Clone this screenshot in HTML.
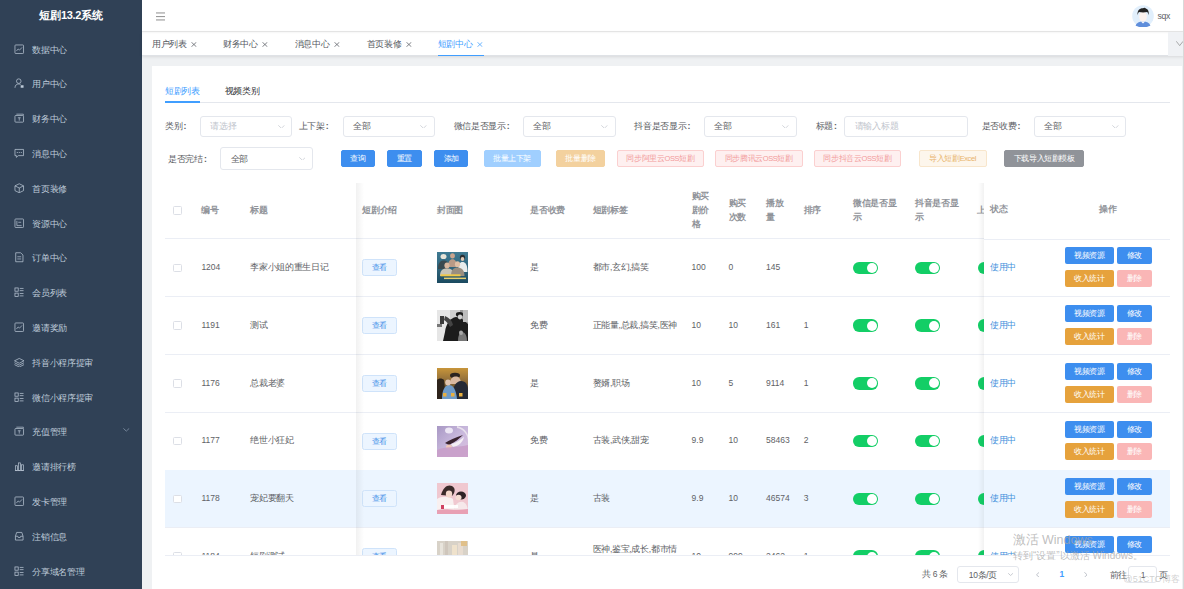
<!DOCTYPE html><html><head><meta charset="utf-8"><style>
*{box-sizing:border-box;margin:0;padding:0}
html,body{width:1184px;height:589px;overflow:hidden;background:#eff1f3;font-family:'Liberation Sans',sans-serif;letter-spacing:-0.3px}
.abs{position:absolute;white-space:nowrap}
#side{position:absolute;left:0;top:0;width:142px;height:589px;background:#304156}
.mi{position:absolute;left:0;width:142px;height:34.8px;color:#bfcbd9;font-size:8.7px;}
.mi span{position:absolute;left:32.3px;top:1.5px;line-height:34.8px}
.mi svg{position:absolute;left:14.3px;top:12.6px;width:10.5px;height:10.5px}
#hdr{position:absolute;left:142px;top:0;width:1042px;height:31.6px;background:#fff;border-bottom:1px solid #e8e8e8}
#tags{position:absolute;left:142px;top:31.6px;width:1042px;height:24.6px;background:#fff;border-bottom:1px solid #dfe2e6;box-shadow:0 1px 3px rgba(0,0,0,.10), inset 0 1px 2px rgba(0,0,0,.04)}
.tg{position:absolute;top:0;line-height:24px;font-size:8.7px;color:#495060}
.tg svg{position:absolute;top:10.2px;width:5.6px;height:5px}
#card{position:absolute;left:152px;top:65.5px;width:1030px;height:540px;background:#fff}
.lbl{position:absolute;font-size:8.7px;color:#5a5d63;line-height:12px;font-weight:500}
.lbl b{margin-left:1.1px}
.sel{position:absolute;height:21.5px;border:1px solid #e4e7ed;border-radius:3px;background:#fff}
.sel span{position:absolute;left:9.5px;top:0;font-size:8.5px;color:#606266}
.sel svg{position:absolute;right:6.5px;width:6.8px;height:3.6px}
.btn{position:absolute;height:17px;border-radius:2px;font-size:7.5px;letter-spacing:-0.4px;text-align:center;line-height:17px;color:#fff}
.th{position:absolute;font-size:8.7px;color:#909399;line-height:13.9px;font-weight:bold}
.td{position:absolute;font-size:8.5px;color:#606266;line-height:12px}
.cb{position:absolute;width:8.7px;height:8.7px;border:1px solid #dcdfe6;border-radius:1.5px;background:#fff}
.sw{position:absolute;width:25px;height:12.4px;border-radius:6.2px;background:#13ce66}
.sw::after{content:'';position:absolute;right:1.2px;top:1.2px;width:10px;height:10px;border-radius:50%;background:#fff}
.look{position:absolute;letter-spacing:-0.4px;width:34.6px;height:17.2px;border:1px solid #cfe3fa;background:#ecf5ff;border-radius:2.5px;color:#3f8ee8;font-size:7.5px;text-align:center;line-height:15.2px}
.ob{position:absolute;height:17px;border-radius:2px;font-size:7.5px;letter-spacing:-0.4px;color:#fff;text-align:center;line-height:17.8px}
</style></head><body>
<div id="side">
<div class="abs" style="left:0;width:142px;top:0;height:31px;line-height:31px;text-align:center;color:#fff;font-weight:bold;font-size:11px">短剧13.2系统</div>
<div class="mi" style="top:31.00px"><svg viewBox="0 0 11 11" style="color:#bfcbd9"><rect x="1" y="1" width="9" height="9" rx="0.8" fill="none" stroke="currentColor" stroke-width="0.75"/><path d="M2.6 7.3 L4.3 5.2 L5.8 6.4 L8.4 3.6" fill="none" stroke="currentColor" stroke-width="0.7"/></svg><span>数据中心</span></div>
<div class="mi" style="top:65.80px"><svg viewBox="0 0 11 11" style="color:#bfcbd9"><circle cx="5" cy="3.3" r="2.4" fill="none" stroke="currentColor" stroke-width="0.75"/><path d="M1 10.3 C1 7.3 3 6.3 5 6.3 C6 6.3 6.6 6.5 7 6.7" fill="none" stroke="currentColor" stroke-width="0.75"/><rect x="7" y="7.6" width="3" height="2.6" fill="currentColor"/></svg><span>用户中心</span></div>
<div class="mi" style="top:100.60px"><svg viewBox="0 0 11 11" style="color:#bfcbd9"><rect x="1" y="2.6" width="9" height="7" rx="0.8" fill="none" stroke="currentColor" stroke-width="0.75"/><path d="M2.5 1.2 H9.8 V2.6" fill="none" stroke="currentColor" stroke-width="0.7"/><path d="M4 5 H7 M5.5 5 V8" fill="none" stroke="currentColor" stroke-width="0.7"/></svg><span>财务中心</span></div>
<div class="mi" style="top:135.40px"><svg viewBox="0 0 11 11" style="color:#bfcbd9"><path d="M1 1.5 H10 V8 H4.5 L2.5 9.8 V8 H1 Z" fill="none" stroke="currentColor" stroke-width="0.75"/><circle cx="3.4" cy="4.8" r="0.55" fill="currentColor"/><circle cx="5.5" cy="4.8" r="0.55" fill="currentColor"/><circle cx="7.6" cy="4.8" r="0.55" fill="currentColor"/></svg><span>消息中心</span></div>
<div class="mi" style="top:170.20px"><svg viewBox="0 0 11 11" style="color:#bfcbd9"><path d="M5.5 0.8 L10 3 V8 L5.5 10.2 L1 8 V3 Z M1 3 L5.5 5.2 L10 3 M5.5 5.2 V10.2" fill="none" stroke="currentColor" stroke-width="0.75"/></svg><span>首页装修</span></div>
<div class="mi" style="top:205.00px"><svg viewBox="0 0 11 11" style="color:#bfcbd9"><rect x="1" y="1" width="9" height="9" rx="0.8" fill="none" stroke="currentColor" stroke-width="0.75"/><path d="M3 3 V8 H8 M4.5 4.5 H7.5" fill="none" stroke="currentColor" stroke-width="0.7"/></svg><span>资源中心</span></div>
<div class="mi" style="top:239.80px"><svg viewBox="0 0 11 11" style="color:#bfcbd9"><path d="M1.8 0.8 H7 L9.4 3.2 V10.2 H1.8 Z" fill="none" stroke="currentColor" stroke-width="0.75"/><path d="M3.5 5 H7.5 M3.5 7.3 H7.5" fill="none" stroke="currentColor" stroke-width="0.7"/></svg><span>订单中心</span></div>
<div class="mi" style="top:274.60px"><svg viewBox="0 0 11 11" style="color:#bfcbd9"><rect x="1" y="1" width="3.4" height="3.4" fill="none" stroke="currentColor" stroke-width="0.75"/><rect x="1" y="6.4" width="3.4" height="3.4" fill="none" stroke="currentColor" stroke-width="0.75"/><path d="M6 1.5 H10 M6 3.8 H10 M6 6.8 H10 M6 9.3 H10" fill="none" stroke="currentColor" stroke-width="0.75"/></svg><span>会员列表</span></div>
<div class="mi" style="top:309.40px"><svg viewBox="0 0 11 11" style="color:#bfcbd9"><rect x="1" y="1" width="9" height="9" rx="0.8" fill="none" stroke="currentColor" stroke-width="0.75"/><path d="M2.6 7.3 L4.3 5.2 L5.8 6.4 L8.4 3.6" fill="none" stroke="currentColor" stroke-width="0.7"/></svg><span>邀请奖励</span></div>
<div class="mi" style="top:344.20px"><svg viewBox="0 0 11 11" style="color:#bfcbd9"><path d="M5.5 1.5 L10.5 4 L5.5 6.5 L0.5 4 Z" fill="none" stroke="currentColor" stroke-width="0.75"/><path d="M0.5 6 L5.5 8.5 L10.5 6 M0.5 8 L5.5 10.5 L10.5 8" fill="none" stroke="currentColor" stroke-width="0.75"/></svg><span>抖音小程序提审</span></div>
<div class="mi" style="top:379.00px"><svg viewBox="0 0 11 11" style="color:#bfcbd9"><rect x="1" y="1" width="3.4" height="3.4" fill="none" stroke="currentColor" stroke-width="0.75"/><rect x="1" y="6.4" width="3.4" height="3.4" fill="none" stroke="currentColor" stroke-width="0.75"/><path d="M6 1.5 H10 M6 3.8 H10 M6 6.8 H10 M6 9.3 H10" fill="none" stroke="currentColor" stroke-width="0.75"/></svg><span>微信小程序提审</span></div>
<div class="mi" style="top:413.80px"><svg viewBox="0 0 11 11" style="color:#bfcbd9"><rect x="1" y="2.6" width="9" height="7" rx="0.8" fill="none" stroke="currentColor" stroke-width="0.75"/><path d="M2.5 1.2 H9.8 V2.6" fill="none" stroke="currentColor" stroke-width="0.7"/><path d="M4 5 H7 M5.5 5 V8" fill="none" stroke="currentColor" stroke-width="0.7"/></svg><span>充值管理</span><svg style="left:123px;top:14.6px;width:6.6px;height:3.6px" viewBox="0 0 6.6 3.6"><path d="M0.4 0.4 L3.3 3.1 L6.2 0.4" fill="none" stroke="#8595aa" stroke-width="0.8"/></svg></div>
<div class="mi" style="top:448.60px"><svg viewBox="0 0 11 11" style="color:#bfcbd9"><path d="M1 10 H10.5" stroke="currentColor" stroke-width="0.7"/><rect x="1.5" y="5" width="2" height="5" fill="none" stroke="currentColor" stroke-width="0.7"/><rect x="4.8" y="2" width="2" height="8" fill="none" stroke="currentColor" stroke-width="0.7"/><rect x="8" y="4" width="2" height="6" fill="none" stroke="currentColor" stroke-width="0.7"/></svg><span>邀请排行榜</span></div>
<div class="mi" style="top:483.40px"><svg viewBox="0 0 11 11" style="color:#bfcbd9"><rect x="1" y="1" width="9" height="9" rx="0.8" fill="none" stroke="currentColor" stroke-width="0.75"/><path d="M2.6 7.3 L4.3 5.2 L5.8 6.4 L8.4 3.6" fill="none" stroke="currentColor" stroke-width="0.7"/></svg><span>发卡管理</span></div>
<div class="mi" style="top:518.20px"><svg viewBox="0 0 11 11" style="color:#bfcbd9"><path d="M1.5 5.5 L2.8 1.5 H8.2 L9.5 5.5 V9.5 H1.5 Z M1.5 5.5 H4 L4.5 6.8 H6.5 L7 5.5 H9.5" fill="none" stroke="currentColor" stroke-width="0.75"/></svg><span>注销信息</span></div>
<div class="mi" style="top:553.00px"><svg viewBox="0 0 11 11" style="color:#bfcbd9"><rect x="1" y="1" width="3.4" height="3.4" fill="none" stroke="currentColor" stroke-width="0.75"/><rect x="1" y="6.4" width="3.4" height="3.4" fill="none" stroke="currentColor" stroke-width="0.75"/><path d="M6 1.5 H10 M6 3.8 H10 M6 6.8 H10 M6 9.3 H10" fill="none" stroke="currentColor" stroke-width="0.75"/></svg><span>分享域名管理</span></div>
</div>
<div id="hdr">
<svg class="abs" style="left:13.6px;top:11.5px;width:9.4px;height:9px" viewBox="0 0 9.4 9"><path d="M0 0.95 H9.4 M0 4.6 H9.4 M0 7.95 H9.4" stroke="#7a7a7a" stroke-width="0.85"/></svg>
<svg class="abs" style="left:990.3px;top:4.9px;width:22px;height:22px" viewBox="0 0 22 22">
<circle cx="11" cy="11" r="10.8" fill="#e1effc"/>
<path d="M3.6 20.6 C4.6 17.8 7 16.6 11 16.6 C15 16.6 17.4 17.8 18.4 20.6 C15.5 22.8 6.5 22.8 3.6 20.6 Z" fill="#5f8edb"/>
<path d="M9 16.4 L11 18.6 L13 16.4 Z" fill="#fafcff"/>
<ellipse cx="11" cy="11.6" rx="3.9" ry="5" fill="#fdf3ef"/>
<path d="M5.6 10.2 C5 5.6 7.4 3.3 10.8 3.3 C12.2 2.5 13.4 2.6 13.8 3.5 C16.2 4.2 17.2 6.6 16.6 10.2 C16.3 8.6 15.8 7.6 15.2 7.1 C12.6 7.7 9.6 7.7 7 7.1 C6.4 7.6 5.9 8.6 5.6 10.2 Z" fill="#242424"/>
</svg>
<div class="abs" style="left:1015.5px;top:0.8px;line-height:31px;font-size:8.7px;color:#606266">sqx</div>
</div>
<div id="tags">
<div class="tg" style="left:10px;color:#55595f;top:0.6px">用户列表</div><svg class="abs" style="left:49.3px;top:10.3px;width:5.8px;height:5px" viewBox="0 0 6 5"><path d="M0.4 0.1 L5.6 4.9 M5.6 0.1 L0.4 4.9" stroke="#55595f" stroke-width="0.75" fill="none"/></svg>
<div class="tg" style="left:81px;color:#55595f;top:0.6px">财务中心</div><svg class="abs" style="left:120.3px;top:10.3px;width:5.8px;height:5px" viewBox="0 0 6 5"><path d="M0.4 0.1 L5.6 4.9 M5.6 0.1 L0.4 4.9" stroke="#55595f" stroke-width="0.75" fill="none"/></svg>
<div class="tg" style="left:152.5px;color:#55595f;top:0.6px">消息中心</div><svg class="abs" style="left:191.8px;top:10.3px;width:5.8px;height:5px" viewBox="0 0 6 5"><path d="M0.4 0.1 L5.6 4.9 M5.6 0.1 L0.4 4.9" stroke="#55595f" stroke-width="0.75" fill="none"/></svg>
<div class="tg" style="left:224.6px;color:#55595f;top:0.6px">首页装修</div><svg class="abs" style="left:263.9px;top:10.3px;width:5.8px;height:5px" viewBox="0 0 6 5"><path d="M0.4 0.1 L5.6 4.9 M5.6 0.1 L0.4 4.9" stroke="#55595f" stroke-width="0.75" fill="none"/></svg>
<div class="tg" style="left:295.6px;color:#409eff;top:0.6px">短剧中心</div><svg class="abs" style="left:334.9px;top:10.3px;width:5.8px;height:5px" viewBox="0 0 6 5"><path d="M0.4 0.1 L5.6 4.9 M5.6 0.1 L0.4 4.9" stroke="#409eff" stroke-width="0.75" fill="none"/></svg>
<div class="abs" style="left:295.6px;top:23.4px;width:46.4px;height:1.4px;background:#409eff"></div>
<div class="abs" style="left:1026.2px;top:0;width:16px;height:24.7px;background:#f0f2f5"></div>
<svg class="abs" style="left:1034.4px;top:9.6px;width:7.4px;height:5px" viewBox="0 0 7.4 5"><path d="M0.3 0.3 L3.7 4.6 L7.1 0.3" fill="none" stroke="#888" stroke-width="0.7"/></svg>
</div>
<div class="abs" style="left:1182.6px;top:0;width:1.4px;height:589px;background:#d9d9d9"></div>
<div id="card"></div>
<div class="abs" style="left:165px;top:85px;font-size:8.7px;line-height:12px;color:#409eff">短剧列表</div>
<div class="abs" style="left:224.5px;top:85px;font-size:8.7px;line-height:12px;color:#303133">视频类别</div>
<div class="abs" style="left:165px;top:101.8px;width:1005px;height:1px;background:#e4e7ed"></div>
<div class="abs" style="left:165px;top:101.3px;width:34.7px;height:1.5px;background:#409eff"></div>
<div class="lbl" style="left:165px;top:120.4px">类别<b>:</b></div>
<div class="sel" style="left:199.7px;top:115.5px;width:92.80000000000001px;height:21.50px"><span style="color:#c0c4cc;line-height:19.50px;top:0.8px">请选择</span><svg viewBox="0 0 7 3.6" style="top:8.05px"><path d="M0.3 0.3 L3.5 3.3 L6.7 0.3" fill="none" stroke="#c0c4cc" stroke-width="0.7"/></svg></div>
<div class="lbl" style="left:298.6px;top:120.4px">上下架<b>:</b></div>
<div class="sel" style="left:342.6px;top:115.5px;width:92.09999999999997px;height:21.50px"><span style="color:#606266;line-height:19.50px;top:0.8px">全部</span><svg viewBox="0 0 7 3.6" style="top:8.05px"><path d="M0.3 0.3 L3.5 3.3 L6.7 0.3" fill="none" stroke="#c0c4cc" stroke-width="0.7"/></svg></div>
<div class="lbl" style="left:453.5px;top:120.4px">微信是否显示<b>:</b></div>
<div class="sel" style="left:522.8px;top:115.5px;width:92.90000000000009px;height:21.50px"><span style="color:#606266;line-height:19.50px;top:0.8px">全部</span><svg viewBox="0 0 7 3.6" style="top:8.05px"><path d="M0.3 0.3 L3.5 3.3 L6.7 0.3" fill="none" stroke="#c0c4cc" stroke-width="0.7"/></svg></div>
<div class="lbl" style="left:634.2px;top:120.4px">抖音是否显示<b>:</b></div>
<div class="sel" style="left:703.5px;top:115.5px;width:93.20000000000005px;height:21.50px"><span style="color:#606266;line-height:19.50px;top:0.8px">全部</span><svg viewBox="0 0 7 3.6" style="top:8.05px"><path d="M0.3 0.3 L3.5 3.3 L6.7 0.3" fill="none" stroke="#c0c4cc" stroke-width="0.7"/></svg></div>
<div class="lbl" style="left:815.6px;top:120.4px">标题<b>:</b></div>
<div class="sel" style="left:844.3px;top:115.5px;width:123.70000000000005px;height:21.50px"><span style="color:#c0c4cc;line-height:19.50px;top:0.8px">请输入标题</span></div>
<div class="lbl" style="left:981.7px;top:120.4px">是否收费<b>:</b></div>
<div class="sel" style="left:1033.6px;top:115.5px;width:92.70000000000005px;height:21.50px"><span style="color:#606266;line-height:19.50px;top:0.8px">全部</span><svg viewBox="0 0 7 3.6" style="top:8.05px"><path d="M0.3 0.3 L3.5 3.3 L6.7 0.3" fill="none" stroke="#c0c4cc" stroke-width="0.7"/></svg></div>
<div class="lbl" style="left:168.1px;top:152.6px">是否完结<b>:</b></div>
<div class="sel" style="left:220.3px;top:147.3px;width:92.59999999999997px;height:22.30px"><span style="color:#606266;line-height:20.30px;top:0.8px">全部</span><svg viewBox="0 0 7 3.6" style="top:8.45px"><path d="M0.3 0.3 L3.5 3.3 L6.7 0.3" fill="none" stroke="#c0c4cc" stroke-width="0.7"/></svg></div>
<div class="btn" style="left:340.6px;top:149.7px;width:34.39999999999998px;background:#3d8eef;color:#fff;border:1px solid #3d8eef;line-height:15.8px">查询</div>
<div class="btn" style="left:387px;top:149.7px;width:34.89999999999998px;background:#3d8eef;color:#fff;border:1px solid #3d8eef;line-height:15.8px">重置</div>
<div class="btn" style="left:433.8px;top:149.7px;width:34.69999999999999px;background:#3d8eef;color:#fff;border:1px solid #3d8eef;line-height:15.8px">添加</div>
<div class="btn" style="left:483.5px;top:149.7px;width:57.200000000000045px;background:#a0cfff;color:#fff;border:1px solid #a0cfff;line-height:15.8px">批量上下架</div>
<div class="btn" style="left:556px;top:149.7px;width:49.299999999999955px;background:#f3d19e;color:#fff;border:1px solid #f3d19e;line-height:15.8px">批量删除</div>
<div class="btn" style="left:617.1px;top:149.7px;width:86.60000000000002px;background:#fef0f0;color:#f29b9b;border:1px solid #fbd0d0;line-height:15.8px">同步阿里云OSS短剧</div>
<div class="btn" style="left:715px;top:149.7px;width:87.5px;background:#fef0f0;color:#f29b9b;border:1px solid #fbd0d0;line-height:15.8px">同步腾讯云OSS短剧</div>
<div class="btn" style="left:814.2px;top:149.7px;width:86.39999999999998px;background:#fef0f0;color:#f29b9b;border:1px solid #fbd0d0;line-height:15.8px">同步抖音云OSS短剧</div>
<div class="btn" style="left:918.7px;top:149.7px;width:67.89999999999998px;background:#fdf6ec;color:#e8b46c;border:1px solid #f8e6cc;line-height:15.8px">导入短剧Excel</div>
<div class="btn" style="left:1004.3px;top:149.7px;width:79.70000000000005px;background:#909399;color:#fff;border:1px solid #909399;line-height:15.8px">下载导入短剧模板</div>
<div class="abs" style="left:165px;top:237.9px;width:1005px;height:1px;background:#ebeef5"></div>
<div class="cb" style="left:173.2px;top:206.05px"></div>
<div class="th" style="left:200.9px;top:204.05px">编号</div>
<div class="th" style="left:250.3px;top:204.05px">标题</div>
<div class="th" style="left:362.2px;top:204.05px">短剧介绍</div>
<div class="th" style="left:436.9px;top:204.05px">封面图</div>
<div class="th" style="left:530.4px;top:204.05px">是否收费</div>
<div class="th" style="left:592.5px;top:204.05px">短剧标签</div>
<div class="th" style="left:691.6px;top:190.15px">购买<br>剧价<br>格</div>
<div class="th" style="left:728.6px;top:197.10px">购买<br>次数</div>
<div class="th" style="left:766px;top:197.10px">播放<br>量</div>
<div class="th" style="left:803.8px;top:204.05px">排序</div>
<div class="th" style="left:853px;top:197.10px">微信是否显<br>示</div>
<div class="th" style="left:915px;top:197.10px">抖音是否显<br>示</div>
<div class="th" style="left:977.3px;top:204.05px">上</div>
<div class="abs" style="left:0;top:239.5px;width:1184px;height:315.70px;overflow:hidden">
<div class="abs" style="left:165px;top:56.75px;width:1005px;height:1px;background:#ebeef5"></div>
<div class="cb" style="left:173.2px;top:24.02px"></div>
<div class="td" style="left:201.4px;top:21.57px;line-height:12px;letter-spacing:0;">1204</div>
<div class="td" style="left:250.3px;top:21.57px;line-height:12px;">李家小姐的重生日记</div>
<div class="look" style="left:362.2px;top:19.77px">查看</div>
<div class="abs" style="left:437px;top:12.88px;width:31px;height:31px;overflow:hidden;line-height:0"><svg width="31" height="31" viewBox="0 0 31 31"><defs><linearGradient id="c1" x1="0" y1="0" x2="0" y2="1"><stop offset="0" stop-color="#3f7a92"/><stop offset="0.6" stop-color="#2d6178"/><stop offset="1" stop-color="#1b4a60"/></linearGradient></defs>
<rect width="31" height="31" fill="url(#c1)"/>
<ellipse cx="6.5" cy="4.5" rx="3" ry="2.6" fill="#e8e4d8"/><path d="M1 17 C1 10 4 8.5 7 8.5 C10 8.5 12 11 12 17 Z" fill="#394a50"/>
<ellipse cx="15.5" cy="3.8" rx="2.4" ry="2.6" fill="#c9a48e"/><path d="M11 15 C11 9 13 7.2 15.5 7.2 C18 7.2 20 9 20 15 Z" fill="#b99a86"/>
<ellipse cx="25.5" cy="5.5" rx="2.6" ry="2.8" fill="#2a2f33"/><ellipse cx="25.5" cy="7" rx="1.8" ry="2" fill="#e0c8b4"/><path d="M21 20 C21 12 23 10 25.5 10 C28 10 30.5 12 30.5 20 Z" fill="#e8ecec"/>
<ellipse cx="10" cy="13.5" rx="2.6" ry="2.9" fill="#d8b8a0"/><path d="M3 24 C3 18 6 16.5 10 16.5 C14 16.5 17 18 17 24 Z" fill="#c8c4b6"/>
<ellipse cx="20.5" cy="12.2" rx="2.6" ry="2.9" fill="#e0c0a6"/><path d="M14 24 C14 17.5 17 15.6 20.5 15.6 C24 15.6 27.5 17.5 27.5 24 Z" fill="#9a8e80"/>
<rect x="3.5" y="22.3" width="20" height="2" fill="#f0c94a"/><rect x="7" y="25.6" width="22" height="1.5" fill="#e8d070"/>
</svg></div>
<div class="td" style="left:530.4px;top:21.57px;line-height:12px;">是</div>
<div class="td" style="left:592.5px;top:20.57px;line-height:14px;">都市,玄幻,搞笑</div>
<div class="td" style="left:691.6px;top:21.57px;line-height:12px;letter-spacing:0;">100</div>
<div class="td" style="left:728.6px;top:21.57px;line-height:12px;letter-spacing:0;">0</div>
<div class="td" style="left:766px;top:21.57px;line-height:12px;letter-spacing:0;">145</div>
<div class="td" style="left:803.8px;top:21.57px;line-height:12px;"></div>
<div class="sw" style="left:853.1px;top:22.18px"></div>
<div class="sw" style="left:915.4px;top:22.18px"></div>
<div class="sw" style="left:977.8px;top:22.18px"></div>
<div class="abs" style="left:165px;top:114.50px;width:1005px;height:1px;background:#ebeef5"></div>
<div class="cb" style="left:173.2px;top:81.78px"></div>
<div class="td" style="left:201.4px;top:79.33px;line-height:12px;letter-spacing:0;">1191</div>
<div class="td" style="left:250.3px;top:79.33px;line-height:12px;">测试</div>
<div class="look" style="left:362.2px;top:77.53px">查看</div>
<div class="abs" style="left:437px;top:70.62px;width:31px;height:31px;overflow:hidden;line-height:0"><svg width="31" height="31" viewBox="0 0 31 31"><rect width="31" height="31" fill="#9a9a9a"/>
<rect x="0" y="0" width="13" height="31" fill="#e6e6e6"/><rect x="13" y="0" width="10" height="9" fill="#d0d0d0"/>
<rect x="3" y="6" width="4" height="8" fill="#3a3a3a"/><rect x="0" y="14" width="5" height="3" fill="#777"/>
<path d="M6 31 L8 22 C9 14 13 8 19 7 L24 8 L31 14 L31 31 Z" fill="#1c1c1c"/>
<ellipse cx="22.5" cy="4.5" rx="3.6" ry="2.4" fill="#1a1a1a"/><ellipse cx="23" cy="7" rx="2.2" ry="2.4" fill="#cfcfcf"/><rect x="26" y="0" width="5" height="12" fill="#bdbdbd"/>
<path d="M21 31 C21 26 22.5 22 25 22 C27.5 22 30 25 30 31 Z" fill="#777"/><ellipse cx="24" cy="22.8" rx="2" ry="2.2" fill="#a8a8a8"/>
<path d="M8 6 C12 8 15 10 16 15 L13 17 C11 13 9 11 7 10 Z" fill="#444"/>
</svg></div>
<div class="td" style="left:530.4px;top:79.33px;line-height:12px;">免费</div>
<div class="td" style="left:592.5px;top:78.33px;line-height:14px;">正能量,总裁,搞笑,医神</div>
<div class="td" style="left:691.6px;top:79.33px;line-height:12px;letter-spacing:0;">10</div>
<div class="td" style="left:728.6px;top:79.33px;line-height:12px;letter-spacing:0;">10</div>
<div class="td" style="left:766px;top:79.33px;line-height:12px;letter-spacing:0;">161</div>
<div class="td" style="left:803.8px;top:79.33px;line-height:12px;letter-spacing:0;">1</div>
<div class="sw" style="left:853.1px;top:79.92px"></div>
<div class="sw" style="left:915.4px;top:79.92px"></div>
<div class="sw" style="left:977.8px;top:79.92px"></div>
<div class="abs" style="left:165px;top:172.25px;width:1005px;height:1px;background:#ebeef5"></div>
<div class="cb" style="left:173.2px;top:139.53px"></div>
<div class="td" style="left:201.4px;top:137.07px;line-height:12px;letter-spacing:0;">1176</div>
<div class="td" style="left:250.3px;top:137.07px;line-height:12px;">总裁老婆</div>
<div class="look" style="left:362.2px;top:135.28px">查看</div>
<div class="abs" style="left:437px;top:128.38px;width:31px;height:31px;overflow:hidden;line-height:0"><svg width="31" height="31" viewBox="0 0 31 31"><defs><linearGradient id="c3" x1="0" y1="0" x2="0" y2="1"><stop offset="0" stop-color="#c8953a"/><stop offset="0.45" stop-color="#8a6a3a"/><stop offset="1" stop-color="#3a2a1c"/></linearGradient></defs>
<rect width="31" height="31" fill="url(#c3)"/>
<path d="M0 31 V12 C2 10 5 10 7 12 L9 31 Z" fill="#2e241c"/>
<ellipse cx="18" cy="7.5" rx="5" ry="2.8" fill="#2b2420"/><path d="M13 16 C13 10 16 8.5 19 8.5 C22 8.5 24 11 24 16 Z" fill="#d8b8a0"/>
<path d="M15 31 C15 19 19 13 24 13 C29 13 31 17 31 22 V31 Z" fill="#252a36"/>
<path d="M5 31 C5 22 8 17 12 17 C16 17 19 21 20 31 Z" fill="#6f9bc8"/><ellipse cx="11" cy="14.5" rx="2.8" ry="3" fill="#e0c4b0"/>
<rect x="6" y="25" width="3.5" height="3.5" fill="#e8b040"/><rect x="14" y="25" width="3.5" height="3.5" fill="#e8b040"/><rect x="22" y="25" width="3.5" height="3.5" fill="#e8b040"/>
</svg></div>
<div class="td" style="left:530.4px;top:137.07px;line-height:12px;">是</div>
<div class="td" style="left:592.5px;top:136.07px;line-height:14px;">赘婿,职场</div>
<div class="td" style="left:691.6px;top:137.07px;line-height:12px;letter-spacing:0;">10</div>
<div class="td" style="left:728.6px;top:137.07px;line-height:12px;letter-spacing:0;">5</div>
<div class="td" style="left:766px;top:137.07px;line-height:12px;letter-spacing:0;">9114</div>
<div class="td" style="left:803.8px;top:137.07px;line-height:12px;letter-spacing:0;">1</div>
<div class="sw" style="left:853.1px;top:137.68px"></div>
<div class="sw" style="left:915.4px;top:137.68px"></div>
<div class="sw" style="left:977.8px;top:137.68px"></div>
<div class="abs" style="left:165px;top:230.00px;width:1005px;height:1px;background:#ebeef5"></div>
<div class="cb" style="left:173.2px;top:197.28px"></div>
<div class="td" style="left:201.4px;top:194.82px;line-height:12px;letter-spacing:0;">1177</div>
<div class="td" style="left:250.3px;top:194.82px;line-height:12px;">绝世小狂妃</div>
<div class="look" style="left:362.2px;top:193.03px">查看</div>
<div class="abs" style="left:437px;top:186.12px;width:31px;height:31px;overflow:hidden;line-height:0"><svg width="31" height="31" viewBox="0 0 31 31"><defs><linearGradient id="c4" x1="0" y1="0" x2="1" y2="1"><stop offset="0" stop-color="#a898c4"/><stop offset="0.5" stop-color="#c8b8dc"/><stop offset="1" stop-color="#dcc0e0"/></linearGradient></defs>
<rect width="31" height="31" fill="url(#c4)"/>
<ellipse cx="12" cy="4.5" rx="4" ry="3" fill="#ece6f4"/>
<path d="M20 2 C26 3 31 8 31 16 L31 9 C29 4 25 1 20 0 Z" fill="#e8e0ec"/>
<path d="M8 17 C12 14 18 12 26 9 C22 13 18 16 12 19 Z" fill="#3a2430"/>
<path d="M14 18 C19 17 23 14 27 11 C26 16 22 20 16 21 Z" fill="#f4eef4"/>
<ellipse cx="12" cy="21" rx="3" ry="2.6" fill="#f0c8b8"/>
<path d="M0 24 C8 20 18 22 31 19 V31 H0 Z" fill="#c89cc8" opacity="0.85"/>
</svg></div>
<div class="td" style="left:530.4px;top:194.82px;line-height:12px;">免费</div>
<div class="td" style="left:592.5px;top:193.82px;line-height:14px;">古装,武侠,甜宠</div>
<div class="td" style="left:691.6px;top:194.82px;line-height:12px;letter-spacing:0;">9.9</div>
<div class="td" style="left:728.6px;top:194.82px;line-height:12px;letter-spacing:0;">10</div>
<div class="td" style="left:766px;top:194.82px;line-height:12px;letter-spacing:0;">58463</div>
<div class="td" style="left:803.8px;top:194.82px;line-height:12px;letter-spacing:0;">2</div>
<div class="sw" style="left:853.1px;top:195.43px"></div>
<div class="sw" style="left:915.4px;top:195.43px"></div>
<div class="sw" style="left:977.8px;top:195.43px"></div>
<div class="abs" style="left:165px;top:230.70px;width:1005px;height:57.25px;background:#ecf5ff"></div>
<div class="abs" style="left:165px;top:287.75px;width:1005px;height:1px;background:#ebeef5"></div>
<div class="cb" style="left:173.2px;top:255.03px"></div>
<div class="td" style="left:201.4px;top:252.57px;line-height:12px;letter-spacing:0;">1178</div>
<div class="td" style="left:250.3px;top:252.57px;line-height:12px;">宠妃要翻天</div>
<div class="look" style="left:362.2px;top:250.78px">查看</div>
<div class="abs" style="left:437px;top:243.88px;width:31px;height:31px;overflow:hidden;line-height:0"><svg width="31" height="31" viewBox="0 0 31 31"><rect width="31" height="31" fill="#f0c8d0"/>
<path d="M4 12 C6 4 11 1 15 3 C19 5 18 10 15 13 Z" fill="#3a2a2a"/>
<path d="M0 31 V16 C4 13 12 13 16 16 L18 31 Z" fill="#f8f0f0"/>
<ellipse cx="12" cy="11" rx="3.2" ry="3.4" fill="#f4d8cc"/>
<ellipse cx="24" cy="12.5" rx="5" ry="4" fill="#2e2226"/><ellipse cx="21.5" cy="14.5" rx="3" ry="2.8" fill="#f6dcd2"/>
<path d="M16 31 C17 22 21 18 26 19 C29 20 31 23 31 31 Z" fill="#f6e8ea"/>
<rect x="5" y="22" width="16" height="3" fill="#ffffff" opacity="0.9"/><rect x="4" y="22" width="3" height="4" fill="#d04060"/>
<path d="M0 27 C8 25 18 28 31 26 V31 H0 Z" fill="#e8a0b4"/>
</svg></div>
<div class="td" style="left:530.4px;top:252.57px;line-height:12px;">是</div>
<div class="td" style="left:592.5px;top:251.57px;line-height:14px;">古装</div>
<div class="td" style="left:691.6px;top:252.57px;line-height:12px;letter-spacing:0;">9.9</div>
<div class="td" style="left:728.6px;top:252.57px;line-height:12px;letter-spacing:0;">10</div>
<div class="td" style="left:766px;top:252.57px;line-height:12px;letter-spacing:0;">46574</div>
<div class="td" style="left:803.8px;top:252.57px;line-height:12px;letter-spacing:0;">3</div>
<div class="sw" style="left:853.1px;top:253.18px"></div>
<div class="sw" style="left:915.4px;top:253.18px"></div>
<div class="sw" style="left:977.8px;top:253.18px"></div>
<div class="abs" style="left:165px;top:345.50px;width:1005px;height:1px;background:#ebeef5"></div>
<div class="cb" style="left:173.2px;top:312.77px"></div>
<div class="td" style="left:201.4px;top:310.32px;line-height:12px;letter-spacing:0;">1184</div>
<div class="td" style="left:250.3px;top:310.32px;line-height:12px;">短剧测试</div>
<div class="look" style="left:362.2px;top:308.52px">查看</div>
<div class="abs" style="left:437px;top:301.62px;width:31px;height:31px;overflow:hidden;line-height:0"><svg width="31" height="31" viewBox="0 0 31 31"><rect width="31" height="31" fill="#d8d2c8"/>
<rect x="3" y="2" width="3" height="29" fill="#e8e4dc"/><rect x="8" y="0" width="3" height="31" fill="#cfc6bc"/>
<rect x="15" y="4" width="5" height="27" fill="#efe2cc"/><rect x="21" y="2" width="5" height="29" fill="#e8dcd0"/>
<rect x="24" y="0" width="6" height="5" fill="#e0c08a"/>
</svg></div>
<div class="td" style="left:530.4px;top:310.32px;line-height:12px;">是</div>
<div class="td" style="left:592.5px;top:302.32px;line-height:14px;">医神,鉴宝,成长,都市情<br>感</div>
<div class="td" style="left:691.6px;top:310.32px;line-height:12px;letter-spacing:0;">10</div>
<div class="td" style="left:728.6px;top:310.32px;line-height:12px;letter-spacing:0;">999</div>
<div class="td" style="left:766px;top:310.32px;line-height:12px;letter-spacing:0;">2462</div>
<div class="td" style="left:803.8px;top:310.32px;line-height:12px;letter-spacing:0;">1</div>
<div class="sw" style="left:853.1px;top:310.93px"></div>
<div class="sw" style="left:915.4px;top:310.93px"></div>
<div class="sw" style="left:977.8px;top:310.93px"></div>
</div>
<div class="abs" style="left:356px;top:183px;width:8px;height:372.20000000000005px;background:linear-gradient(90deg,rgba(0,0,0,.055),rgba(0,0,0,0))"></div>
<div class="abs" style="left:978px;top:183px;width:6px;height:372.20000000000005px;background:linear-gradient(270deg,rgba(0,0,0,.05),rgba(0,0,0,0))"></div>
<div class="abs" style="left:984px;top:183px;width:186px;height:372.20000000000005px;background:#fff;overflow:hidden">
<div class="th" style="left:6px;top:20.45px">状态</div>
<div class="th" style="left:115px;top:20.45px">操作</div>
<div class="abs" style="left:0;top:55.5px;width:186px;height:1px;background:#ebeef5"></div>
<div class="abs" style="left:0;top:113.25px;width:186px;height:1px;background:#ebeef5"></div>
<div class="td" style="left:6px;top:78.17px;color:#4290dc">使用中</div>
<div class="ob" style="left:81px;top:64.38px;width:49px;background:#3d8eef">视频资源</div>
<div class="ob" style="left:133.2px;top:64.38px;width:34.4px;background:#3d8eef">修改</div>
<div class="ob" style="left:81px;top:87.08px;width:49px;background:#e6a23c">收入统计</div>
<div class="ob" style="left:133.2px;top:87.08px;width:34.4px;background:#fab6b6">删除</div>
<div class="abs" style="left:0;top:171.00px;width:186px;height:1px;background:#ebeef5"></div>
<div class="td" style="left:6px;top:135.93px;color:#4290dc">使用中</div>
<div class="ob" style="left:81px;top:122.12px;width:49px;background:#3d8eef">视频资源</div>
<div class="ob" style="left:133.2px;top:122.12px;width:34.4px;background:#3d8eef">修改</div>
<div class="ob" style="left:81px;top:144.82px;width:49px;background:#e6a23c">收入统计</div>
<div class="ob" style="left:133.2px;top:144.82px;width:34.4px;background:#fab6b6">删除</div>
<div class="abs" style="left:0;top:228.75px;width:186px;height:1px;background:#ebeef5"></div>
<div class="td" style="left:6px;top:193.68px;color:#4290dc">使用中</div>
<div class="ob" style="left:81px;top:179.88px;width:49px;background:#3d8eef">视频资源</div>
<div class="ob" style="left:133.2px;top:179.88px;width:34.4px;background:#3d8eef">修改</div>
<div class="ob" style="left:81px;top:202.57px;width:49px;background:#e6a23c">收入统计</div>
<div class="ob" style="left:133.2px;top:202.57px;width:34.4px;background:#fab6b6">删除</div>
<div class="abs" style="left:0;top:286.50px;width:186px;height:1px;background:#ebeef5"></div>
<div class="td" style="left:6px;top:251.43px;color:#4290dc">使用中</div>
<div class="ob" style="left:81px;top:237.62px;width:49px;background:#3d8eef">视频资源</div>
<div class="ob" style="left:133.2px;top:237.62px;width:34.4px;background:#3d8eef">修改</div>
<div class="ob" style="left:81px;top:260.32px;width:49px;background:#e6a23c">收入统计</div>
<div class="ob" style="left:133.2px;top:260.32px;width:34.4px;background:#fab6b6">删除</div>
<div class="abs" style="left:0;top:287.20px;width:186px;height:57.25px;background:#ecf5ff"></div>
<div class="abs" style="left:0;top:344.25px;width:186px;height:1px;background:#ebeef5"></div>
<div class="td" style="left:6px;top:309.18px;color:#4290dc">使用中</div>
<div class="ob" style="left:81px;top:295.38px;width:49px;background:#3d8eef">视频资源</div>
<div class="ob" style="left:133.2px;top:295.38px;width:34.4px;background:#3d8eef">修改</div>
<div class="ob" style="left:81px;top:318.07px;width:49px;background:#e6a23c">收入统计</div>
<div class="ob" style="left:133.2px;top:318.07px;width:34.4px;background:#fab6b6">删除</div>
<div class="abs" style="left:0;top:402.00px;width:186px;height:1px;background:#ebeef5"></div>
<div class="td" style="left:6px;top:366.93px;color:#4290dc">使用中</div>
<div class="ob" style="left:81px;top:353.12px;width:49px;background:#3d8eef">视频资源</div>
<div class="ob" style="left:133.2px;top:353.12px;width:34.4px;background:#3d8eef">修改</div>
<div class="ob" style="left:81px;top:375.82px;width:49px;background:#e6a23c">收入统计</div>
<div class="ob" style="left:133.2px;top:375.82px;width:34.4px;background:#fab6b6">删除</div>
</div>
<div class="abs" style="left:165px;top:555px;width:1005px;height:1px;background:#ebeef5"></div>
<div class="abs" style="left:922.1px;top:568.3px;font-size:8.5px;line-height:12px;color:#606266;">共 6 条</div>
<div class="sel" style="left:957.3px;top:566.4px;width:61.5px;height:16.9px"><span style="line-height:14.9px;left:10.5px;font-size:8.5px;top:0.5px">10条/页</span><svg viewBox="0 0 7 3.6" style="top:6px;right:4.3px;width:5.2px;height:2.8px"><path d="M0.3 0.3 L3.5 3.3 L6.7 0.3" fill="none" stroke="#b4b8c0" stroke-width="1"/></svg></div>
<svg class="abs" style="left:1035.6px;top:571.8px;width:3.6px;height:5.6px" viewBox="0 0 3.6 5.6"><path d="M3.3 0.2 L0.5 2.8 L3.3 5.4" fill="none" stroke="#b4b8c0" stroke-width="0.85"/></svg>
<div class="abs" style="left:1059.6px;top:568px;font-size:8.5px;line-height:12px;color:#409eff;font-weight:bold">1</div>
<svg class="abs" style="left:1083.5px;top:571.8px;width:3.6px;height:5.6px" viewBox="0 0 3.6 5.6"><path d="M0.3 0.2 L3.1 2.8 L0.3 5.4" fill="none" stroke="#b4b8c0" stroke-width="0.85"/></svg>
<div class="abs" style="left:1109.6px;top:569px;font-size:8.5px;line-height:12px;color:#606266">前往</div>
<div class="sel" style="left:1128.2px;top:566.4px;width:28.5px;height:16.9px"><span style="line-height:14.9px;left:11.6px;font-size:8.5px;top:0.5px">1</span></div>
<div class="abs" style="left:1159.2px;top:569px;font-size:8.5px;line-height:12px;color:#606266">页</div>
<div class="abs" style="left:1012.5px;top:531.5px;font-size:12.5px;line-height:16px;letter-spacing:0;color:rgba(165,165,165,.72)">激活 Windows</div>
<div class="abs" style="left:1013px;top:549.8px;font-size:10px;line-height:12px;letter-spacing:0;color:rgba(165,165,165,.72)">转到“设置”以激活 Windows。</div>
<div class="abs" style="left:1123.6px;top:572.6px;font-size:9px;line-height:12px;letter-spacing:0;color:rgba(150,150,150,.45)">@51CTO博客</div>
</body></html>
